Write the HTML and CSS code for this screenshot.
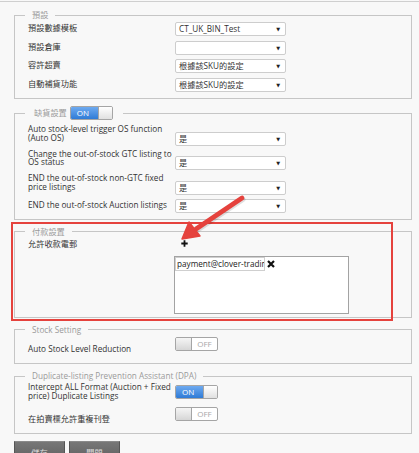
FILE: index.html
```html
<!DOCTYPE html>
<html>
<head>
<meta charset="utf-8">
<link rel="stylesheet" href="styles.css">
</head>
<body>
<div class="topline"></div>
<div class="page">
  <fieldset class="fs fs1">
    <legend class="lg">預設</legend>
    <div class="rows rows1">
      <div class="row"><div class="lbl">預設數據模板</div><div class="sel"><span>CT_UK_BIN_Test</span><i>▼</i></div></div>
      <div class="row"><div class="lbl">預設倉庫</div><div class="sel"><span>&nbsp;</span><i>▼</i></div></div>
      <div class="row"><div class="lbl">容許超賣</div><div class="sel"><span>根據該SKU的設定</span><i>▼</i></div></div>
      <div class="row"><div class="lbl">自動補貨功能</div><div class="sel"><span>根據該SKU的設定</span><i>▼</i></div></div>
    </div>
  </fieldset>

  <fieldset class="fs fs2">
    <legend class="lg lg-toggle"><span>缺貨設置</span><span class="tg on"><b>ON</b><em></em></span></legend>
    <div class="rows rows2">
      <div class="row"><div class="lbl">Auto stock-level trigger OS function (Auto OS)</div><div class="sel"><span>是</span><i>▼</i></div></div>
      <div class="row"><div class="lbl">Change the out-of-stock GTC listing to OS status</div><div class="sel"><span>是</span><i>▼</i></div></div>
      <div class="row"><div class="lbl">END the out-of-stock non-GTC fixed price listings</div><div class="sel"><span>是</span><i>▼</i></div></div>
      <div class="row"><div class="lbl">END the out-of-stock Auction listings</div><div class="sel"><span>是</span><i>▼</i></div></div>
    </div>
  </fieldset>

  <fieldset class="fs fs3">
    <legend class="lg">付款設置</legend>
    <div class="prow">
      <div class="lbl">允許收款電郵</div>
      <svg class="plus" width="7" height="7" viewBox="0 0 7 7"><path d="M3.5 0.3V6.7M0.3 3.5H6.7" stroke="#111" stroke-width="1.8"/></svg>
    </div>
    <div class="emails">
      <div class="tag">
        <div class="tagin">payment@clover-trading.com</div>
        <svg class="x" width="8" height="8" viewBox="0 0 8 8"><path d="M1 1L7 7M7 1L1 7" stroke="#111" stroke-width="2.2"/></svg>
      </div>
    </div>
  </fieldset>

  <fieldset class="fs fs4">
    <legend class="lg">Stock Setting</legend>
    <div class="trow low">
      <div class="lbl">Auto Stock Level Reduction</div>
      <span class="tg off"><em></em><b>OFF</b></span>
    </div>
  </fieldset>

  <fieldset class="fs fs5">
    <legend class="lg">Duplicate-listing Prevention Assistant (DPA)</legend>
    <div class="trow mid">
      <div class="lbl">Intercept ALL Format (Auction + Fixed price) Duplicate Listings</div>
      <span class="tg on"><b>ON</b><em></em></span>
    </div>
    <div class="trow low second">
      <div class="lbl">在拍賣標允許重複刊登</div>
      <span class="tg off"><em></em><b>OFF</b></span>
    </div>
  </fieldset>

  <div class="btns">
    <button class="btn">儲存</button>
    <button class="btn">關閉</button>
  </div>
</div>

<div class="redbox"></div>
<svg class="arrow" width="419" height="453" viewBox="0 0 419 453">
  <line x1="242" y1="198" x2="196" y2="229" stroke="rgba(0,0,0,0.12)" stroke-width="5" stroke-linecap="round" transform="translate(1,1.5)"/>
  <line x1="242" y1="198" x2="196" y2="229" stroke="#e5423d" stroke-width="4.8" stroke-linecap="round"/>
  <polygon points="182,239 189,222 200,236" fill="#e5423d" stroke="#e5423d" stroke-width="1.5" stroke-linejoin="round"/>
</svg>
</body>
</html>
```

FILE: styles.css
```css
html, body {
  margin: 0;
  padding: 0;
}
body {
  background: #f8f8f8;
  font-family: "Open Sans", "Noto Sans CJK TC", sans-serif;
  font-size: 8.2px;
  color: #333;
  position: relative;
  width: 419px;
  height: 453px;
  overflow: hidden;
}
.topline {
  height: 1px;
  margin-top: 1px;
  background: #cfcfcf;
}
.page {
  padding: 8px 7px 0 14px;
}
.fs {
  margin: 0 0 7px 0;
  padding: 2px 6px 6px 13px;
  border: 1px solid #c6c6c6;
  min-width: 0;
}
.lg {
  margin-left: -3px;
  padding: 0 7px;
  line-height: 10px;
  color: #9a9a9a;
}
.lg-toggle {
  display: flex;
  align-items: center;
  gap: 3px;
  padding: 0 10px 0 9px;
}
.lbl {
  width: 147px;
  flex: none;
  line-height: 8.5px;
}
.rows {
  display: flex;
  flex-direction: column;
}
.rows1 { gap: 4.7px; }
.rows2 { gap: 4px; padding-top: 3px; }
.row {
  display: flex;
  align-items: last baseline;
}
.sel {
  height: 12px;
  border: 1px solid #cdcdcd;
  border-radius: 2px;
  background: #fff;
  display: flex;
  align-items: center;
  justify-content: space-between;
  padding: 0 5px 0 3px;
  box-sizing: content-box;
  width: 101px;
  line-height: 12px;
  color: #333;
}
.sel i {
  font-style: normal;
  font-size: 5px;
  color: #222;
  font-family: "DejaVu Sans", sans-serif;
}
/* toggles */
.tg {
  display: inline-flex;
  width: 41px;
  height: 12px;
  border: 1px solid #a5a5a5;
  border-radius: 2px;
  overflow: hidden;
  background: #fff;
  flex: none;
}
.tg b {
  font-weight: normal;
  line-height: 12px;
  font-size: 8px;
}
.tg.on b {
  width: 27px;
  background: linear-gradient(#6eaaf0, #2f7bd6);
  color: #fff;
  padding-left: 6px;
  box-sizing: border-box;
}
.tg.on em {
  flex: 1;
  border-left: 1px solid #a5a5a5;
  background: linear-gradient(#ffffff, #e0e0e0);
}
.tg.off em {
  width: 15px;
  border-right: 1px solid #a5a5a5;
  background: linear-gradient(#f5f5f5, #d6d6d6);
}
.tg.off b {
  flex: 1;
  text-align: center;
  color: #a8a8a8;
}
/* payment */
.fs3 { padding-bottom: 3px; }
.prow {
  display: flex;
  align-items: center;
  margin-top: 1px;
  height: 10px;
}
.plus {
  margin-left: 6px;
  margin-top: -2px;
}
.emails {
  margin: 6px 0 0 146px;
  width: 173px;
  height: 56px;
  border: 1px solid #a3a3a3;
  background: #fff;
}
.tag {
  display: flex;
  align-items: center;
}
.tagin {
  height: 12px;
  line-height: 12px;
  border: 1px solid #cfcfcf;
  overflow: hidden;
  white-space: nowrap;
  color: #222;
  padding-left: 1px;
  box-sizing: content-box;
  width: 87px;
}
.x { margin-left: 2px; }
/* toggle rows */
.fs4, .fs5 { padding-bottom: 10px; }
.trow {
  display: flex;
}
.trow.low { align-items: flex-start; }
.trow.low .lbl { padding-top: 8px; }
.trow.mid { align-items: center; }
.trow.second { margin-top: 7px; }
.trow.second .lbl { padding-top: 7.5px; }
/* buttons */
.btns {
  display: flex;
  gap: 4px;
}
.btn {
  width: 51px;
  height: 22px;
  margin: 0;
  padding: 0;
  border: 1px solid #555;
  border-top-color: #8a8a8a;
  background: linear-gradient(#777, #5e5e5e);
  color: #ddd;
  font-family: "Noto Sans CJK TC", sans-serif;
  font-size: 8.2px;
  line-height: 20px;
}
/* overlays */
.redbox {
  position: absolute;
  left: 11px;
  top: 222px;
  width: 378px;
  height: 95px;
  border: 2px solid #e5423d;
}
.arrow {
  position: absolute;
  left: 0;
  top: 0;
  pointer-events: none;
}
```
